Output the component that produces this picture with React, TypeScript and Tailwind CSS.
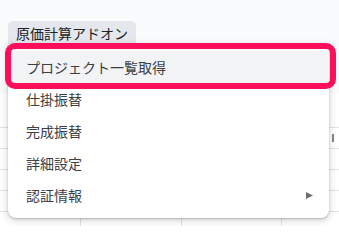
import { ReactNode } from 'react'

const items = ['プロジェクト一覧取得', '仕掛振替', '完成振替', '詳細設定', '認証情報']

function GridRow({ children }: { children?: ReactNode }) {
  return (
    <div className="h-[21px] border-b border-[#e2e3e3] flex">
      <div className="w-[81px] border-r border-[#e2e3e3]" />
      <div className="w-[101px] border-r border-[#e2e3e3]" />
      <div className="w-[100px] border-r border-[#e2e3e3]" />
      <div className="flex-1 flex items-center justify-end pr-[5px]">{children}</div>
    </div>
  )
}

export default function App() {
  return (
    <div
      className="relative w-[339px] h-[226px] overflow-hidden bg-white text-[#202124]"
      style={{ fontFamily: '"Noto Sans CJK JP", "Noto Sans", sans-serif' }}
    >
      {/* toolbar */}
      <div className="h-[93px] bg-[#f9fbfd] pt-[20px] pl-[8px]">
        <div className="inline-flex items-center h-[25px] px-[8px] rounded-t-[5px] bg-[#e4e7eb] text-[14px] leading-none text-[#202124]">
          原価計算アドオン
        </div>
      </div>

      {/* sheet */}
      <div className="h-[14px]" />
      <div className="border-t border-[#e2e3e3] mt-[20px]">
        <GridRow>
          <span className="w-[2px] h-[8px] bg-[#80868b]" />
        </GridRow>
        <GridRow />
        <GridRow />
        <GridRow />
        <GridRow />
      </div>

      {/* dropdown menu */}
      <div className="absolute left-[8px] top-[44px] w-[321px] h-[174px] py-[7px] bg-white rounded-b-[8px] shadow-[0_2px_6px_2px_rgba(60,64,67,0.15),0_1px_2px_rgba(60,64,67,0.3)]">
        {items.map((label, i) => (
          <div
            key={label}
            className={`h-[32px] flex items-center pl-[18px] pr-[16px] text-[14px] text-[#3c4043] ${
              i === 0 ? 'bg-[#f1f3f4]' : ''
            }`}
          >
            <span className="flex-1">{label}</span>
            {i === items.length - 1 && (
              <svg width="7" height="7" viewBox="0 0 7 7" className="mr-0">
                <path d="M0 0 L7 3.5 L0 7 Z" fill="#6b6f73" />
              </svg>
            )}
          </div>
        ))}
      </div>

      {/* highlight frame */}
      <div className="absolute left-[5px] top-[43px] w-[331px] h-[46px] border-[6px] border-[#ff0f5b] rounded-[10px]" />
    </div>
  )
}
